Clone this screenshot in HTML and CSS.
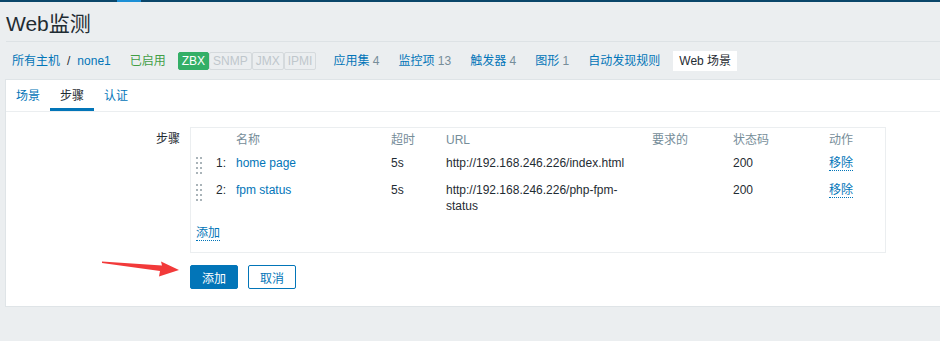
FILE: index.html
```html
<!DOCTYPE html>
<html lang="zh-CN">
<head>
    <meta charset="UTF-8">
    <title>Web监测</title>
    <link rel="stylesheet" href="styles.css">
</head>
<body>
    <div class="topbar"><span class="topbar-mark"></span></div>
    <div class="page">
        <div class="header">
            <h1 class="title">Web监测</h1>
        </div>
        <ul class="host-nav">
            <li class="crumbs"><a href="#">所有主机</a><span class="sep">/</span><a href="#">none1</a></li>
            <li class="status-on">已启用</li>
            <li class="badges">
                <span class="badge badge-on">ZBX</span><span class="badge">SNMP</span><span class="badge">JMX</span><span class="badge">IPMI</span>
            </li>
            <li><a href="#">应用集</a> <span class="count">4</span></li>
            <li><a href="#">监控项</a> <span class="count">13</span></li>
            <li><a href="#">触发器</a> <span class="count">4</span></li>
            <li><a href="#">图形</a> <span class="count">1</span></li>
            <li><a href="#">自动发现规则</a></li>
            <li class="selected">Web 场景</li>
        </ul>

        <div class="panel">
            <ul class="tabs">
                <li><a href="#">场景</a></li>
                <li class="active">步骤</li>
                <li><a href="#">认证</a></li>
            </ul>
            <div class="form">
                <div class="form-row">
                    <label class="form-label">步骤</label>
                    <div class="steps-box">
                        <table class="steps">
                            <colgroup>
                                <col style="width: 20px">
                                <col style="width: 25px">
                                <col style="width: 155px">
                                <col style="width: 55px">
                                <col style="width: 206px">
                                <col style="width: 81px">
                                <col style="width: 96px">
                                <col style="width: 56px">
                            </colgroup>
                            <thead>
                                <tr>
                                    <th></th>
                                    <th></th>
                                    <th>名称</th>
                                    <th>超时</th>
                                    <th>URL</th>
                                    <th>要求的</th>
                                    <th>状态码</th>
                                    <th>动作</th>
                                </tr>
                            </thead>
                            <tbody>
                                <tr>
                                    <td>
                                        <svg class="drag-icon" width="6" height="17" viewBox="0 0 6 17">
                                            <g fill="#aab4b9">
                                                <rect x="0" y="0" width="2" height="2"/><rect x="4" y="0" width="2" height="2"/>
                                                <rect x="0" y="5" width="2" height="2"/><rect x="4" y="5" width="2" height="2"/>
                                                <rect x="0" y="10" width="2" height="2"/><rect x="4" y="10" width="2" height="2"/>
                                                <rect x="0" y="15" width="2" height="2"/><rect x="4" y="15" width="2" height="2"/>
                                            </g>
                                        </svg>
                                    </td>
                                    <td>1:</td>
                                    <td><a href="#">home page</a></td>
                                    <td>5s</td>
                                    <td class="url">http://192.168.246.226/index.html</td>
                                    <td></td>
                                    <td>200</td>
                                    <td><a href="#" class="link-action">移除</a></td>
                                </tr>
                                <tr>
                                    <td>
                                        <svg class="drag-icon" width="6" height="17" viewBox="0 0 6 17">
                                            <g fill="#aab4b9">
                                                <rect x="0" y="0" width="2" height="2"/><rect x="4" y="0" width="2" height="2"/>
                                                <rect x="0" y="5" width="2" height="2"/><rect x="4" y="5" width="2" height="2"/>
                                                <rect x="0" y="10" width="2" height="2"/><rect x="4" y="10" width="2" height="2"/>
                                                <rect x="0" y="15" width="2" height="2"/><rect x="4" y="15" width="2" height="2"/>
                                            </g>
                                        </svg>
                                    </td>
                                    <td>2:</td>
                                    <td><a href="#">fpm status</a></td>
                                    <td>5s</td>
                                    <td class="url">http://192.168.246.226/php-fpm-status</td>
                                    <td></td>
                                    <td>200</td>
                                    <td><a href="#" class="link-action">移除</a></td>
                                </tr>
                            </tbody>
                        </table>
                        <a href="#" class="link-action add-step">添加</a>
                    </div>
                </div>
                <div class="form-actions">
                    <button class="btn">添加</button>
                    <button class="btn btn-alt">取消</button>
                </div>
            </div>
        </div>
    </div>

    <!-- annotation arrow drawn over the screenshot -->
    <svg class="arrow" width="90" height="24" viewBox="0 0 90 24">
        <polygon points="0,0.5 60,4.5 59,0.5 77,9 57,15.5 58,10 0,2" fill="#f23a3a"/>
    </svg>
</body>
</html>
```

FILE: styles.css
```css
body {
    margin: 0;
    background: #ebeef0;
    color: #1f2c33;
    font-family: "Liberation Sans", "Noto Sans CJK SC", sans-serif;
    font-size: 12px;
    line-height: 16px;
    min-height: 341px;
    position: relative;
}
a {
    color: #0275b8;
    text-decoration: none;
}
ul {
    list-style: none;
    margin: 0;
    padding: 0;
}
.topbar {
    height: 2px;
    background: #0a466a;
}
.topbar-mark {
    display: block;
    margin-left: 117px;
    width: 24px;
    height: 2px;
    background: #1c8fd6;
}
.page {
    padding-left: 5px;
}
.header {
    margin-left: 1px;
    padding: 10px 0 6px;
    border-bottom: 1px solid #dde2e5;
}
.title {
    margin: 0;
    font-size: 21px;
    font-weight: normal;
    line-height: 23px;
}
.host-nav {
    display: flex;
    align-items: center;
    gap: 7px;
    height: 37px;
    padding-left: 1px;
}
.host-nav li {
    padding: 0 6px;
    white-space: nowrap;
}
.crumbs .sep {
    margin: 0 7px;
}
.status-on {
    color: #429e47;
}
.host-nav .badges {
    display: flex;
    margin-left: -1px;
    padding: 0 4px 0 0;
}
.badge {
    display: inline-block;
    padding: 1px 3px 0;
    line-height: 15px;
    border: 1px solid #d5dadd;
    border-radius: 2px;
    color: #bfc7cc;
    background: #ebeef0;
}
.badge-on {
    background: #34af67;
    border-color: #34af67;
    color: #fff;
}
.count {
    color: #768d99;
}
.host-nav .selected {
    background: #fff;
    line-height: 20px;
}
.panel {
    background: #fff;
    border: 1px solid #dfe4e7;
    border-right: 0;
    padding-bottom: 17px;
}
.tabs {
    display: flex;
    border-bottom: 1px solid #ebeef0;
}
.tabs li {
    padding: 8px 10px 4px;
    border-bottom: 3px solid transparent;
}
.tabs .active {
    border-bottom-color: #0275b8;
}
.form {
    padding-top: 15px;
}
.form-row {
    display: flex;
}
.form-label {
    width: 174px;
    padding: 4px 10px 0 0;
    text-align: right;
}
.steps-box {
    width: 694px;
    border: 1px solid #ebeef0;
    padding-bottom: 11px;
}
.steps {
    table-layout: fixed;
    border-collapse: collapse;
    width: 694px;
}
.steps th, .steps td {
    padding: 4px 0 7px;
    text-align: left;
    vertical-align: top;
    font-weight: normal;
}
.steps th {
    color: #768d99;
    padding-bottom: 3px;
}
.steps td:first-child {
    padding-left: 5px;
}
.steps td:nth-child(2) {
    padding-left: 5px;
}
.steps .url {
    padding-right: 8px;
}
.drag-icon {
    display: block;
    margin: 2px 0 -3px;
}
.link-action {
    border-bottom: 1px dotted #0275b8;
}
.add-step {
    display: inline-block;
    margin: 5px 0 0 5px;
    line-height: 14px;
}
.form-actions {
    display: flex;
    gap: 10px;
    margin: 12px 0 0 184px;
}
.btn {
    height: 24px;
    padding: 0 11px;
    font-family: inherit;
    font-size: 12px;
    color: #fff;
    background: #0275b8;
    border: 1px solid #0275b8;
    border-radius: 2px;
}
.btn-alt {
    color: #0275b8;
    background: #fff;
}
.arrow {
    position: absolute;
    left: 102px;
    top: 261px;
}
```
